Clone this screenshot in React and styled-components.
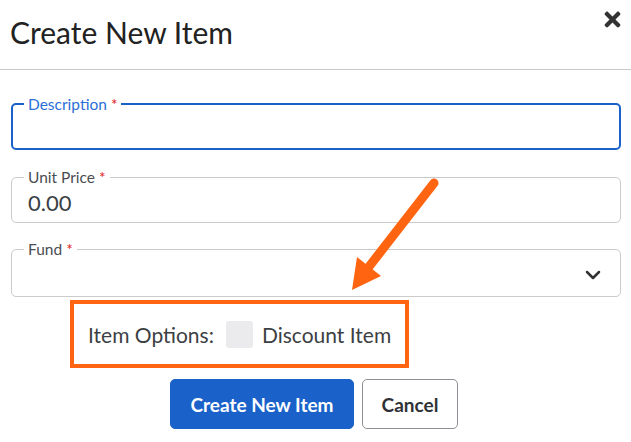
import React from 'react'
import styled, { createGlobalStyle } from 'styled-components'
import { FaTimes } from 'react-icons/fa'
import { ChevronDown } from 'lucide-react'

const GlobalStyle = createGlobalStyle`
    body {
        margin: 0;
        background: #fff;
        font-family: Lato, "Open Sans", sans-serif;
        color: #333;
    }
    * {
        box-sizing: border-box;
    }
`

const Page = styled.div`
    position: relative;
    width: 631px;
    height: 442px;
    overflow: hidden;
`

const Header = styled.div`
    display: flex;
    justify-content: space-between;
    align-items: flex-start;
    height: 70px;
    padding: 0 7px 0 10px;
    border-bottom: 1px solid #c8c8c8;
`

const Title = styled.h2`
    margin: 14px 0 0;
    font-size: 30px;
    font-weight: 400;
    line-height: 36px;
    color: #222;
`

const Close = styled.button`
    border: none;
    background: none;
    padding: 0;
    margin-top: 8px;
    color: #333;
    display: flex;
`

const Body = styled.div`
    display: flex;
    flex-direction: column;
    padding: 33px 10px 0 11px;
`

const Field = styled.div`
    position: relative;
    display: flex;
    align-items: center;
    justify-content: space-between;
    height: ${p => p.$focused ? '47px' : '46px'};
    margin-bottom: ${p => p.$mb || 0}px;
    padding: 4px 15px 0 16px;
    border: ${p => p.$focused ? '2px solid #1a62c9' : '1px solid #cbcbcb'};
    border-radius: 5px;
`

const Label = styled.span`
    position: absolute;
    top: -9px;
    left: ${p => p.$focused ? 11 : 12}px;
    padding: 0 4px;
    background: #fff;
    font-size: 15.5px;
    line-height: 16px;
    color: ${p => p.$focused ? '#2b6fd6' : '#4a4d52'};
`

const Star = styled.span`
    color: #e02020;
`

const Value = styled.span`
    font-size: 22px;
    color: #3c3f44;
`

const Options = styled.div`
    display: flex;
    align-items: center;
    align-self: flex-start;
    margin: 3px 0 0 59px;
    width: 339px;
    height: 68px;
    padding: 0 13px 0 14px;
    border: 4px solid #ff6410;
    font-size: 21px;
    color: #3c3f44;
`

const Check = styled.span`
    width: 27px;
    height: 27px;
    margin: 0 9px 0 12px;
    border-radius: 3px;
    background: #ebebed;
`

const Buttons = styled.div`
    display: flex;
    justify-content: center;
    gap: 8px;
    margin-top: 11px;
    padding-right: 4px;
`

const Button = styled.button`
    width: ${p => p.$primary ? 184 : 96}px;
    height: 50px;
    padding: 0;
    border-radius: 5px;
    border: 1px solid ${p => p.$primary ? '#1a62c9' : '#8e9096'};
    background: ${p => p.$primary ? '#1a62c9' : '#fff'};
    color: ${p => p.$primary ? '#fff' : '#2f3236'};
    font-family: Lato, sans-serif;
    font-size: 19px;
    font-weight: 700;
`

const Arrow = styled.svg`
    position: absolute;
    left: 0;
    top: 0;
    pointer-events: none;
`

const App = () => {
    return (
        <Page>
            <GlobalStyle />
            <Header>
                <Title>Create New Item</Title>
                <Close><FaTimes size={23} /></Close>
            </Header>
            <Body>
                <Field $focused $mb={27}>
                    <Label $focused>Description <Star>*</Star></Label>
                </Field>
                <Field $mb={26}>
                    <Label>Unit Price <Star>*</Star></Label>
                    <Value>0.00</Value>
                </Field>
                <Field style={{ height: 48 }}>
                    <Label>Fund <Star>*</Star></Label>
                    <span />
                    <ChevronDown size={24} strokeWidth={2.5} color="#333" />
                </Field>
                <Options>
                    Item Options:
                    <Check />
                    Discount Item
                </Options>
                <Buttons>
                    <Button $primary>Create New Item</Button>
                    <Button>Cancel</Button>
                </Buttons>
            </Body>
            <Arrow width="631" height="442">
                <line x1="434" y1="183" x2="368" y2="268" stroke="#ff6410" strokeWidth="9" strokeLinecap="round" />
                <polygon points="352,290 357,257 381,276" fill="#ff6410" />
            </Arrow>
        </Page>
    )
}

export default App
